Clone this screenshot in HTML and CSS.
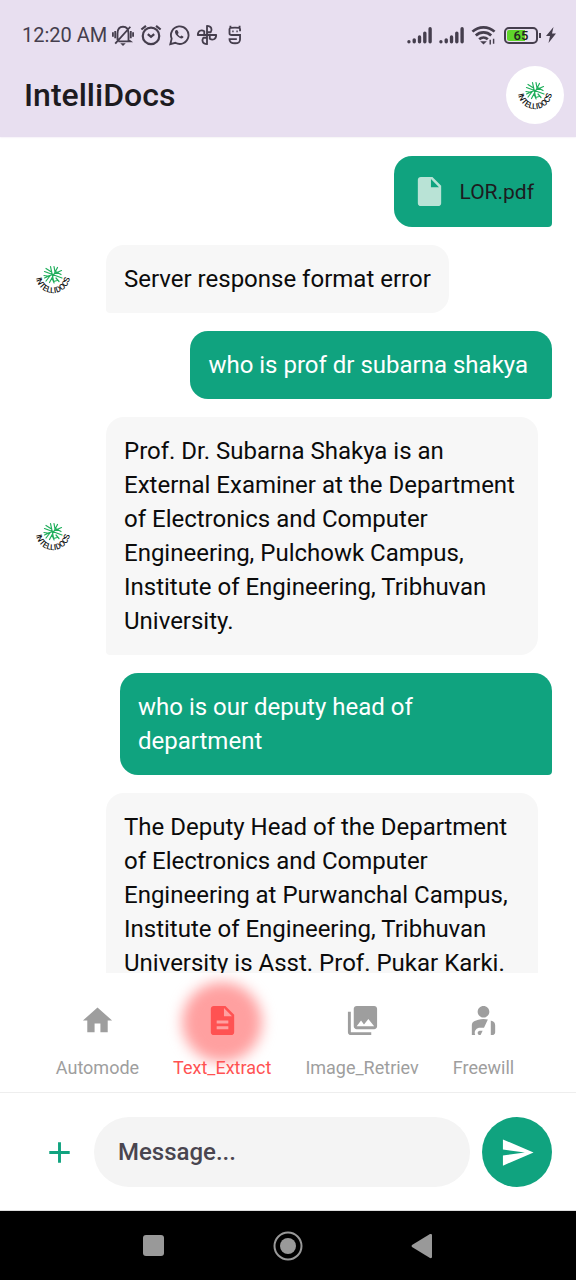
FILE: index.html
```html
<!DOCTYPE html>
<html lang="en">
<head>
<meta charset="utf-8">
<meta name="viewport" content="width=device-width, initial-scale=1">
<title>IntelliDocs</title>
<link rel="stylesheet" href="styles.css">
</head>
<body class="app">
<svg class="defs" aria-hidden="true">
  <defs>
    <path id="logo-arc" d="M12 26A17 17 0 0 0 46 26"/>
    <g id="logo-mark" fill="none" stroke="#1fae5b" stroke-width="1.200" stroke-linecap="round">
      <path d="M26.500 16.500L30 33M33.500 17.500L25.500 32.500M20.500 21.500L38 28M20.500 28L37.500 20.500M22 18.500L27.500 22M31 22L30 16.500M31.500 21.500L37 24.500M32 28L35 31.500M28 28L29.500 31.500L33 30.500M20 25.500L25.500 26.500L22 31"/>
    </g>
  </defs>
</svg>

<header class="header">
  <div class="status">
    <span class="clock">12:20 AM</span>
    <div class="notices">
      <svg class="notice" viewBox="0 0 24 24" fill="none" stroke="#453e4d" stroke-width="2"><path d="M6 17.500V10.500C6 5 9 3 12 3s6 2 6 7.500V17.500l2 1.500H7M3.500 21.500L20 3M1 9v5M3.500 7.500v8M23 9v5M20.500 7.500v8"/><path d="M9 21h6L12 24z" fill="#453e4d" stroke="none"/></svg>
      <svg class="notice" viewBox="0 0 24 24" fill="none" stroke="#453e4d" stroke-width="2.400"><circle cx="12" cy="13" r="9"/><path d="M1.500 6L6.500 2M22.500 6L17.500 2M8.500 11l3.500 3 3.500-3"/></svg>
      <svg class="notice" viewBox="0 0 24 24" fill="none" stroke="#453e4d" stroke-width="2"><path d="M2.500 22l1.500-6A9.600 9.600 0 1 1 8 20.500z"/><path d="M8.200 7c-1.200 1.200-.7 3.600 1.900 6.200s5 3.200 6.300 1.900c.6-.6.500-1.400.2-1.600l-1.900-1-1.300 1.200c-1.100-.4-2.300-1.600-2.800-2.800l1-1.200-.9-2.300c-.4-.8-1.800-1-2.500-.4z" fill="#453e4d" stroke="none"/></svg>
      <svg class="notice" viewBox="0 0 24 24" fill="none" stroke="#453e4d" stroke-width="2" stroke-linejoin="round"><path d="M12 12V2c5 0 6 4 4 7h-4M12 12h10c0 5-4 6-7 4v-4M12 12v10c-5 0-6-4-4-7h4M12 12H2c0-5 4-6 7-4v4"/></svg>
      <svg class="notice" viewBox="0 0 24 24" fill="none" stroke="#453e4d" stroke-width="2"><path d="M17.500 8V5.500C17.500 4 16 4 12 4S6 4 6 5.500V10c0 1.500 1 2 2.500 2h9v4.500c0 3.500-1.500 4.500-5.500 4.500s-6-1-6-4.500h8M7 4V2M17 4V2M9 8h1.500M13.500 8H15"/></svg>
    </div>
    <div class="signals">
      <svg class="bars" viewBox="0 0 27 18" stroke="#453e4d" stroke-width="3.500" stroke-linecap="round"><path d="M2 16v0M7.500 16v-2M13 16v-5M18.500 16V7M24 16V2.500"/></svg>
      <svg class="bars" viewBox="0 0 27 18" stroke="#453e4d" stroke-width="3.500" stroke-linecap="round"><path d="M2 16v0M7.500 16v-2M13 16v-5M18.500 16V7M24 16V2.500"/></svg>
      <svg class="wifi" viewBox="0 0 26 20" fill="none" stroke="#453e4d" stroke-width="2.800"><path d="M1.500 6.500c6.500-6 16.500-6 23 0M5 10.500c4.500-4.200 11.500-4.200 16 0M8.500 14.500c2.700-2.500 6.300-2.500 9 0"/><path d="M9.500 16.500h7L13 20z" fill="#453e4d" stroke="none"/><path d="M20 15v5M23.500 14v5" stroke-width="1.500"/></svg>
      <div class="battery"><span class="battery-level">65</span></div>
      <svg class="bolt" viewBox="0 0 10 16" fill="#453e4d"><path d="M7.500 0L0 9h4L2.500 16 10 6.500H6z"/></svg>
    </div>
  </div>
  <div class="appbar">
    <h1 class="title">IntelliDocs</h1>
    <svg class="logo logo-round" viewBox="0 0 58 58" role="img" aria-label="IntelliDocs logo"><use href="#logo-mark"/><text class="logo-text"><textPath href="#logo-arc" startOffset="50%">INTELLIDOCS</textPath></text></svg>
  </div>
</header>

<main class="chat">
  <div class="row"><div class="bubble bubble-bot bubble-past"></div></div>
  <div class="row row-user">
    <div class="bubble bubble-user file">
      <svg class="icon" viewBox="0 0 24 24" fill="#b9e3d6"><path d="M6 2c-1.100 0-2 .9-2 2v16c0 1.100.9 2 2 2h12c1.100 0 2-.9 2-2V8l-6-6H6zm7 7V3.500L18.500 9H13z"/></svg>
      <span class="file-name">LOR.pdf</span>
    </div>
  </div>
  <div class="row">
    <svg class="logo" viewBox="0 0 58 58" role="img" aria-label="IntelliDocs logo"><use href="#logo-mark"/><text class="logo-text"><textPath href="#logo-arc" startOffset="50%">INTELLIDOCS</textPath></text></svg>
    <p class="bubble bubble-bot">Server response format error</p>
  </div>
  <div class="row row-user"><p class="bubble bubble-user">who is prof dr subarna shakya&nbsp;</p></div>
  <div class="row">
    <svg class="logo" viewBox="0 0 58 58" role="img" aria-label="IntelliDocs logo"><use href="#logo-mark"/><text class="logo-text"><textPath href="#logo-arc" startOffset="50%">INTELLIDOCS</textPath></text></svg>
    <p class="bubble bubble-bot">Prof. Dr. Subarna Shakya is an External Examiner at the Department of Electronics and Computer Engineering, Pulchowk Campus, Institute of Engineering, Tribhuvan University.</p>
  </div>
  <div class="row row-user"><p class="bubble bubble-user">who is our deputy head of department&nbsp;</p></div>
  <div class="row">
    <p class="bubble bubble-bot">The Deputy Head of the Department of Electronics and Computer Engineering at Purwanchal Campus, Institute of Engineering, Tribhuvan University is Asst. Prof. Pukar Karki.</p>
  </div>
</main>

<nav class="tabs" aria-label="Mode">
  <button class="tab" type="button"><svg class="icon" viewBox="0 0 24 24" fill="currentColor"><path d="M10 20v-6h4v6h5v-8h3L12 3 2 12h3v8z"/></svg>Automode</button>
  <button class="tab tab-active" type="button"><svg class="icon" viewBox="0 0 24 24" fill="currentColor"><path d="M14 2H6c-1.100 0-2 .9-2 2v16c0 1.100.9 2 2 2h12c1.100 0 2-.9 2-2V8l-6-6zm2 16H8v-2h8v2zm0-4H8v-2h8v2zm-3-5V3.500L18.500 9H13z"/></svg>Text_Extract</button>
  <button class="tab" type="button"><svg class="icon" viewBox="0 0 24 24" fill="currentColor"><path d="M22 16V4c0-1.100-.9-2-2-2H8c-1.100 0-2 .9-2 2v12c0 1.100.9 2 2 2h12c1.100 0 2-.9 2-2zm-11-4l2.030 2.710L16 11l4 5H8l3-4zM2 6v14c0 1.100.9 2 2 2h14v-2H4V6H2z"/></svg>Image_Retriev</button>
  <button class="tab" type="button"><svg class="icon" viewBox="0 0 24 24" fill="currentColor"><path d="M8 6c0-2.210 1.790-4 4-4s4 1.790 4 4-1.790 4-4 4-4-1.790-4-4zM17 22h1c1.100 0 2-.9 2-2v-4.780c0-1.120-.61-2.150-1.610-2.660-.43-.22-.9-.43-1.390-.62V22zM12.340 17L15 11.330C14.070 11.120 13.070 11 12 11c-2.530 0-4.710.7-6.390 1.560C4.610 13.070 4 14.100 4 15.220V22h2.340C6.120 21.550 6 21.040 6 20.500 6 18.570 7.570 17 9.500 17h2.840zM10 22l1.410-3H9.500c-.83 0-1.500.67-1.500 1.500S8.670 22 9.500 22h.5z"/></svg>Freewill</button>
</nav>

<form class="composer">
  <button class="round-button add" type="button" aria-label="Add attachment"><svg class="icon" viewBox="0 0 24 24" fill="currentColor"><path d="M19 13h-6v6h-2v-6H5v-2h6V5h2v6h6v2z"/></svg></button>
  <input class="message" type="text" placeholder="Message..." aria-label="Message">
  <button class="round-button send" type="button" aria-label="Send"><svg class="icon" viewBox="0 0 24 24" fill="currentColor"><path d="M2.010 21L23 12 2.010 3 2 10l15 2-15 2z"/></svg></button>
</form>

<footer class="system">
  <button class="system-button" type="button" aria-label="Recent apps"><svg class="system-icon" viewBox="0 0 30 30" fill="#999"><rect x="5" y="4" width="21" height="21" rx="3"/></svg></button>
  <button class="system-button" type="button" aria-label="Home"><svg class="system-icon" viewBox="0 0 30 30" fill="#999"><circle cx="15" cy="15" r="13.500" fill="none" stroke="#999" stroke-width="2"/><circle cx="15" cy="15" r="8"/></svg></button>
  <button class="system-button" type="button" aria-label="Back"><svg class="system-icon" viewBox="0 0 30 30" fill="#999"><path d="M4 14q-1 1 0 2l18 11q2 .5 2-1V4q0-1.500-2-1z"/></svg></button>
</footer>
</body>
</html>
```
FILE: styles.css
```css
* {
  box-sizing: border-box;
}

.app {
  display: flex;
  flex-direction: column;
  height: 100vh;
  margin: 0;
  background: #fff;
  color: #0b0b0b;
  font-family: Roboto, "Noto Sans", sans-serif;
}

button {
  padding: 0;
  border: 0;
  background: none;
  font: inherit;
}

svg {
  display: block;
  flex: none;
}

.defs {
  position: absolute;
  width: 0;
  height: 0;
}

.icon {
  width: 35px;
  height: 35px;
}

.header {
  flex: none;
  padding: 4px 12px 13px 22px;
  background: #e8dff0;
  box-shadow: 0 0 2px #e8dff0;
}

.status {
  display: flex;
  align-items: center;
  height: 62px;
}

.clock {
  color: #453e4d;
  font-size: 20px;
}

.notices {
  display: flex;
  gap: 4px;
  margin-left: 4px;
}

.notice {
  width: 24px;
  height: 22px;
}

.signals {
  display: flex;
  align-items: center;
  gap: 6px;
  margin-left: auto;
  margin-right: 8px;
}

.bars {
  width: 26px;
  height: 18px;
}

.wifi {
  width: 25px;
  height: 20px;
}

.battery {
  position: relative;
  width: 34px;
  height: 17px;
  margin: 0 2px;
  padding: 1px;
  border: 2px solid #453e4d;
  border-radius: 5px;
  background: linear-gradient(90deg, #5fd62b 65%, transparent 65%) content-box;
}

.battery::after {
  content: "";
  position: absolute;
  top: 4px;
  right: -5px;
  width: 2px;
  height: 5px;
  background: #453e4d;
}

.battery-level {
  display: block;
  color: #222;
  font-size: 13px;
  font-weight: 500;
  line-height: 11px;
  text-align: center;
}

.bolt {
  width: 10px;
  height: 16px;
}

.appbar {
  display: flex;
  align-items: center;
  justify-content: space-between;
  padding-left: 2px;
}

.title {
  margin: 0;
  color: #1d1b20;
  font-size: 32px;
  font-weight: 500;
}

.logo {
  width: 58px;
  height: 58px;
  margin: -6px 24px -6px 0;
}

.logo-round {
  margin: 0;
  border-radius: 50%;
  background: #fff;
}

.logo-text {
  fill: #111;
  font-size: 8px;
  font-weight: 500;
  text-anchor: middle;
}

.chat {
  display: flex;
  flex: 1;
  flex-direction: column;
  gap: 18px;
  min-height: 0;
  padding: 0 24px;
  overflow: hidden;
}

.row {
  display: grid;
  flex: none;
  grid-template-columns: 82px minmax(0, 432px);
  align-items: center;
}

.row .bubble {
  grid-column: 2;
}

.row-user {
  display: flex;
  justify-content: flex-end;
}

.bubble {
  justify-self: start;
  max-width: 432px;
  margin: 0;
  padding: 17px 18px;
  font-size: 24px;
  line-height: 34px;
}

.bubble-bot {
  border-radius: 18px 18px 18px 4px;
  background: #f7f7f7;
}

.bubble-past {
  width: 318px;
  height: 1px;
  padding: 0;
  border-radius: 0;
}

.bubble-user {
  border-radius: 18px 18px 4px 18px;
  background: #10a37f;
  color: #fff;
}

.file {
  display: flex;
  align-items: center;
  gap: 12px;
  padding: 18px;
}

.file-name {
  color: #1d1b20;
  font-size: 21px;
}

.tabs {
  display: flex;
  flex: none;
  justify-content: center;
  gap: 34px;
  padding: 30px 6px 12px 0;
  border-bottom: 1px solid #eee;
}

.tab {
  display: flex;
  flex-direction: column;
  align-items: center;
  gap: 18px;
  color: #9e9e9e;
  font-size: 18px;
  line-height: 24px;
}

.tab-active {
  position: relative;
  isolation: isolate;
  color: #ff5252;
}

.tab-active::before {
  content: "";
  position: absolute;
  z-index: -1;
  top: -21px;
  left: 50%;
  width: 80px;
  height: 80px;
  margin-left: -40px;
  border-radius: 50%;
  background: #ffa0a0;
  filter: blur(7px);
}

.composer {
  display: flex;
  flex: none;
  align-items: center;
  padding: 24px 24px 23px;
  border-bottom: 1px solid #ddd;
}

.round-button {
  display: flex;
  flex: none;
  align-items: center;
  justify-content: center;
  width: 70px;
  height: 70px;
  border-radius: 50%;
}

.add {
  color: #10a37f;
}

.send {
  background: #10a37f;
  color: #fff;
}

.message {
  flex: 1;
  min-width: 0;
  height: 70px;
  margin-right: 12px;
  padding: 0 24px;
  border: 0;
  border-radius: 35px;
  background: #f4f4f4;
  font: 500 24px Roboto, "Noto Sans", sans-serif;
}

.message::placeholder {
  color: #49454f;
  opacity: 1;
}

.system {
  display: flex;
  flex: none;
  justify-content: center;
  height: 69px;
  background: #000;
}

.system-button {
  display: flex;
  align-items: center;
  justify-content: center;
  width: 135px;
}

.system-icon {
  width: 30px;
  height: 30px;
}
```
